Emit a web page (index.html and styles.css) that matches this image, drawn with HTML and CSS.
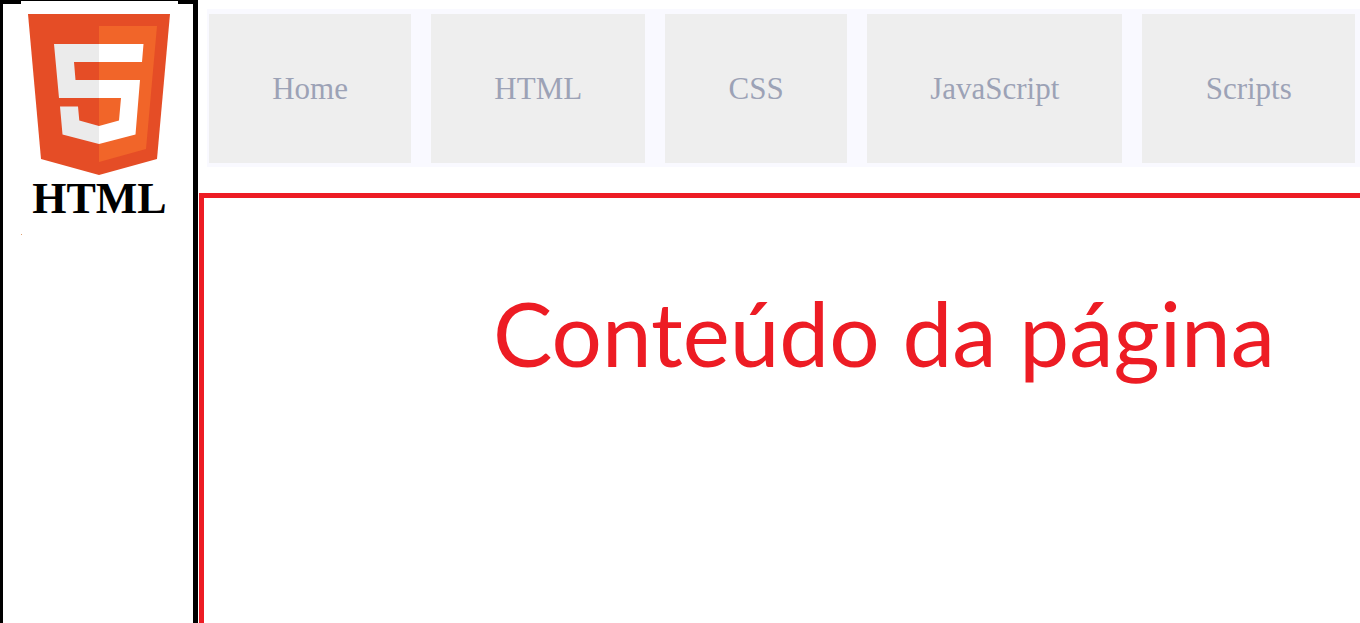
FILE: index.html
```html
<!DOCTYPE html>
<html lang="pt">
<head>
  <meta charset="utf-8">
  <meta name="viewport" content="width=device-width, initial-scale=1">
  <title>HTML</title>
  <link rel="stylesheet" href="styles.css">
</head>
<body class="page">
  <aside class="sidebar">
    <div class="brand">
      <svg class="brand-logo" viewBox="28 14 142 161" aria-hidden="true">
        <path fill="#e54d26" d="M28 14H170L157 159L99 175L41 159Z"/>
        <path fill="#f16529" d="M99 26H157L146 149L99 162Z"/>
        <path fill="#ebebeb" d="M54 44H99V62H74L75.500 80H99V98H59ZM60 106.500H78L79.300 120.500L99 126V144L62.500 134.500Z"/>
        <path fill="#fff" d="M99 44H143.500L142 62H99ZM99 80H140L135.500 134.500L99 144V126L119 120.500L121 98H99Z"/>
      </svg>
      <span class="brand-name">HTML</span>
    </div>
  </aside>
  <div class="main">
    <nav class="menu">
      <a class="menu-item" href="#">Home</a>
      <a class="menu-item" href="#">HTML</a>
      <a class="menu-item" href="#">CSS</a>
      <a class="menu-item" href="#">JavaScript</a>
      <a class="menu-item" href="#">Scripts</a>
    </nav>
    <main class="content">
      <h1 class="content-title">Conteúdo da página</h1>
    </main>
  </div>
</body>
</html>
```

FILE: styles.css
```css
* {
  box-sizing: border-box;
}

.page {
  display: flex;
  gap: 1px;
  min-height: 100vh;
  margin: 0;
  background: #fff;
  font-family: "Liberation Serif", serif;
}

.sidebar {
  flex: 0 0 198px;
  border: solid #000;
  border-width: 4px 5px 0 3px;
}

/* The brand panel covers part of the sidebar's top border. */
.brand {
  display: flex;
  flex-direction: column;
  margin: -3px 15px 0 18px;
  padding-top: 13px;
  background: #fff;
}

.brand-logo {
  width: 142px;
  margin-left: 7px;
}

.brand-name {
  margin-top: 4px;
  color: #000;
  font-size: 44px;
  font-weight: 700;
  line-height: 40px;
  text-align: center;
}

.brand::after {
  content: "";
  width: 1px;
  height: 1px;
  margin-top: 15px;
  background: #e0a070;
}

.main {
  display: flex;
  flex: 1;
  flex-direction: column;
  min-width: 0;
}

.menu {
  display: flex;
  gap: 20px;
  margin: 9px 0 26px 8px;
  padding: 5px 5px 4px 2px;
  background: #f9f9ff;
}

.menu-item {
  flex: 1 1 auto;
  padding: 57px 16px 56px;
  background: #eee;
  color: #9ca2b6;
  font-size: 31px;
  line-height: 36px;
  text-align: center;
  text-decoration: none;
}

.content {
  flex: 1;
  padding: 75px 0 0 204px;
  border: solid #ed1c24;
  border-width: 5px 0 0 5px;
}

.content-title {
  margin: 0;
  color: #ed1c24;
  font-family: Lato, sans-serif;
  font-size: 89px;
  font-weight: 400;
  line-height: 120px;
  text-align: center;
}
```
